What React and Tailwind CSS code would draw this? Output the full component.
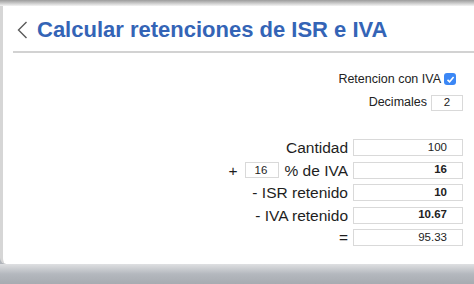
import React from "react";

const font = { fontFamily: '"Liberation Sans", Arial, sans-serif' };

function ValueBox({ value, bold }) {
  return (
    <div
      className={`w-[110px] h-[17px] border border-[#d9d9d9] bg-white flex items-center justify-end pr-[15px] text-[11.5px] text-[#222] ${
        bold ? "font-bold" : ""
      }`}
    >
      {value}
    </div>
  );
}

function Row({ children, value, bold }) {
  return (
    <div className="flex items-center justify-end gap-[5px] h-[17px]">
      <div className="flex items-center text-[15.5px] leading-[17px] text-[#1e1e1e]">{children}</div>
      <ValueBox value={value} bold={bold} />
    </div>
  );
}

export default function App() {
  return (
    <div className="w-[474px] h-[284px] overflow-hidden flex flex-col bg-[#b1b5bb]" style={font}>
      {/* top shadow */}
      <div className="h-[6px] bg-gradient-to-b from-[#9c9c9c] to-[#f4f4f4]" />

      {/* card */}
      <div className="h-[258px] bg-white border-l-[3px] border-[#d6d6d6] rounded-bl-[6px] flex flex-col">
        {/* header */}
        <div className="flex items-center h-[26px] mt-[11px] pl-[14px]">
          <svg width="11" height="18" viewBox="0 0 11 18" className="mr-[9px]">
            <path d="M9.5 1 L1.5 9 L9.5 17" fill="none" stroke="#5a5a5a" strokeWidth="1.4" />
          </svg>
          <h1 className="text-[22px] leading-[26px] font-bold text-[#3464b6]">
            Calcular retenciones de ISR e IVA
          </h1>
        </div>
        <div className="mt-[8px] ml-[10px] h-[2px] bg-[#d2d2d2]" />

        {/* options */}
        <div className="flex flex-col items-end">
          <div className="flex items-center gap-[3px] h-[14px] mt-[19px] pr-[18px]">
            <span className="text-[12.5px] text-[#222]">Retencion con IVA</span>
            <span className="w-[12px] h-[12px] rounded-[3px] bg-[#3b87f5] flex items-center justify-center">
              <svg width="9" height="9" viewBox="0 0 9 9">
                <path d="M1.5 4.8 L3.6 6.8 L7.6 2" fill="none" stroke="white" strokeWidth="1.6" />
              </svg>
            </span>
          </div>
          <div className="flex items-center gap-[4px] h-[17px] mt-[8px] pr-[11px]">
            <span className="text-[12.5px] text-[#222]">Decimales</span>
            <div className="w-[32px] h-[16px] border border-[#d9d9d9] flex items-center justify-center text-[11.5px] text-[#222]">
              2
            </div>
          </div>
        </div>

        {/* calculations */}
        <div className="flex flex-col gap-[5.5px] mt-[28px] pr-[11px]">
          <Row value="100">Cantidad</Row>
          <Row value="16" bold>
            <span className="mr-[7px]">+</span>
            <div className="w-[34px] h-[16px] border border-[#d9d9d9] flex items-center pl-[9px] text-[11.5px] mr-[6px]">
              16
            </div>
            % de IVA
          </Row>
          <Row value="10" bold>- ISR retenido</Row>
          <Row value="10.67" bold>- IVA retenido</Row>
          <Row value="95.33">=</Row>
        </div>
      </div>

      {/* bottom bar */}
      <div className="flex-1 bg-gradient-to-b from-[#dfe0e2] via-[#b4b8be] to-[#a7abb1]" />
    </div>
  );
}
